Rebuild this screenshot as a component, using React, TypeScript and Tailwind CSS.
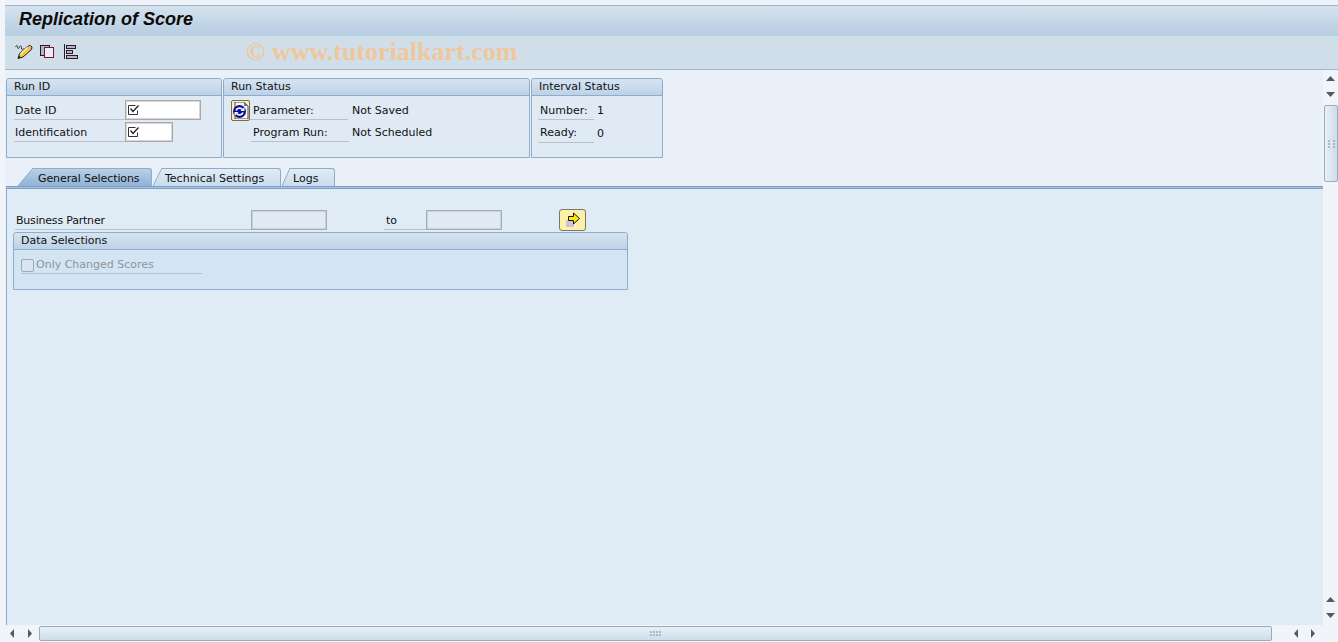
const uiFont = 'font-["DejaVu_Sans","Noto_Sans",sans-serif]';

function EditIcon() {
  return (
    <svg width="18" height="16" viewBox="0 0 18 16">
      <path d="M0.500 3c1-2 2-2 2 0s1 2 2 0 2-1 2 1 1 1.500 2 .5" fill="none" stroke="#333" strokeWidth="1" />
      <path d="M3 14.500l1.500-5 8.500-7.500 2.500-.5 1.500 1.500-.5 2.500-8.500 7.500z" fill="#f5c93e" stroke="#222" strokeWidth="1" />
      <path d="M5.500 10l7.500-7" stroke="#fff4b8" strokeWidth="1.200" />
      <path d="M13 2.500l2.500 2.500" stroke="#e9a6a0" strokeWidth="2" />
      <path d="M3 14.500l1-3 2 2z" fill="#222" />
    </svg>
  );
}

function CopyIcon() {
  return (
    <svg width="14" height="13" viewBox="0 0 14 13">
      <rect x="0.500" y="0.500" width="9" height="10" fill="#b7b3c6" stroke="#1c1c1c" />
      <rect x="4.500" y="2.500" width="9" height="10" fill="#e2eefa" stroke="#8a1020" />
    </svg>
  );
}

function TreeIcon() {
  return (
    <svg width="15" height="15" viewBox="0 0 15 15">
      <path d="M0.500 0v15" stroke="#222" />
      <rect x="2.500" y="1.500" width="9" height="3" fill="#c9a9d6" stroke="#222" />
      <rect x="2.500" y="6.500" width="6" height="3" fill="#c9a9d6" stroke="#222" />
      <rect x="2.500" y="11.500" width="11" height="3" fill="#c9a9d6" stroke="#222" />
    </svg>
  );
}

function CheckMark() {
  return (
    <svg width="12" height="11" viewBox="0 0 12 11">
      <path d="M9.500 5.500v4h-9v-9h7" fill="none" stroke="#333" />
      <path d="M2.500 3.500l2.500 3 5.500-6" fill="none" stroke="#222" strokeWidth="1.300" />
    </svg>
  );
}

function RefreshButton() {
  return (
    <button className="flex h-[21px] w-[19px] items-center justify-center rounded-[2px] border border-[#6f6c58] bg-[#fdedb0]">
      <svg width="16" height="17" viewBox="0 0 16 17">
        <path d="M2 0h9l4 4v13h-13z" fill="#f4f6fa" stroke="#222" strokeWidth="0.800" />
        <path d="M11 0l4 4h-4z" fill="#6f7890" />
        <circle cx="6.500" cy="9.500" r="6.500" fill="#0c0c96" />
        <path d="M3 8.500c1-3 5-3 6.500-1" fill="none" stroke="#f4f6fa" strokeWidth="1.800" />
        <path d="M10 10.500c-1 3-5 3-6.500 1" fill="none" stroke="#f4f6fa" strokeWidth="1.800" />
        <path d="M7.500 9h4v-4zM5.500 10h-4v4z" fill="#f4f6fa" />
      </svg>
    </button>
  );
}

function ArrowButton() {
  return (
    <button className="flex h-[22px] w-[27px] items-center justify-center rounded-[3px] border border-[#77766a] bg-[#fdf0a8]">
      <svg width="16" height="16" viewBox="0 0 16 16">
        <rect x="1" y="8" width="10" height="7" fill="#d3c0dc" />
        <rect x="9" y="11" width="2" height="4" fill="#f4f4f4" />
        <path d="M3.500 4.500h5v-3.500l6 5.500-6 5.500v-3.500h-5z" fill="#ffec00" stroke="#111" strokeWidth="1" />
      </svg>
    </button>
  );
}

function Triangle({ dir }: { dir: 'up' | 'down' | 'left' | 'right' }) {
  const paths = {
    up: 'M0 7L4.500 2L9 7z',
    down: 'M0 2h9L4.500 7z',
    left: 'M6 0v9L2 4.500z',
    right: 'M2 0v9l4-4.500z',
  };
  return (
    <svg width="9" height="9" viewBox="0 0 9 9">
      <path d={paths[dir]} fill="#4c5c6c" />
    </svg>
  );
}

function ScrollButton({ dir, className }: { dir: 'up' | 'down' | 'left' | 'right'; className: string }) {
  return (
    <div className={`flex shrink-0 items-center justify-center bg-[#f1f5fa] ${className}`}>
      <Triangle dir={dir} />
    </div>
  );
}

function Grip({ vertical }: { vertical?: boolean }) {
  return (
    <div className={`grid gap-[1px] ${vertical ? 'grid-cols-2 gap-x-[3px]' : 'grid-cols-4 gap-y-[1px] gap-x-[1px]'}`}>
      {Array.from({ length: vertical ? 6 : 8 }).map((_, i) => (
        <span key={i} className="h-[2px] w-[2px] bg-[#a9bac8]" />
      ))}
    </div>
  );
}

function GroupBox({ title, className, children }: { title: string; className: string; children: React.ReactNode }) {
  return (
    <section className={`rounded-t-[3px] border border-[#8fadcb] ${className}`}>
      <h2 className="h-[17px] rounded-t-[3px] border-b border-[#8fadcb] bg-gradient-to-b from-[#d6e4f1] to-[#bdd2e7] pl-[7px] text-[11px] leading-[16px] font-normal text-[#111]">
        {title}
      </h2>
      {children}
    </section>
  );
}

function Label({ text, className }: { text: string; className: string }) {
  return (
    <div className={`h-[20px] shrink-0 border-b border-[#b6c2cc] text-[11px] leading-[20px] text-[#111] ${className}`}>
      {text}
    </div>
  );
}

function Value({ text, className }: { text: string; className: string }) {
  return <span className={`pt-[1px] text-[11px] leading-[20px] text-[#111] ${className}`}>{text}</span>;
}

function CheckField({ width }: { width: string }) {
  return (
    <div className={`flex h-[20px] items-start border border-[#a8a8a8] bg-white pl-[2px] pt-[4px] shadow-[inset_0_0_0_1px_#d8d8d8] ${width}`}>
      <CheckMark />
    </div>
  );
}

function DisabledField() {
  return <div className="h-[20px] w-[76px] shrink-0 border border-[#a9adb0] bg-[#dfeaf4] shadow-[inset_0_0_0_1px_#c9d0d6]" />;
}

function Tab({
  id,
  label,
  active,
  slant,
  width,
  className,
}: {
  id: string;
  label: string;
  active?: boolean;
  slant: number;
  width: string;
  className: string;
}) {
  return (
    <div className={`flex h-[18px] items-stretch ${className}`}>
      <svg width={slant} height="18" viewBox={`0 0 ${slant} 18`} className="shrink-0">
        <defs>
          <linearGradient id={id} x1="0" y1="0" x2="0" y2="1">
            <stop offset="0" stopColor={active ? '#b9d0e7' : '#e0ebf6'} />
            <stop offset="1" stopColor={active ? '#8fb2d6' : '#c9dcee'} />
          </linearGradient>
        </defs>
        <path d={`M0 18L${slant} 0V18z`} fill={`url(#${id})`} />
        <path d={`M0 18L${slant} 0`} stroke="#8fadcb" fill="none" />
      </svg>
      <div
        className={`rounded-tr-[3px] border-t border-r border-[#8fadcb] text-[11px] leading-[19px] text-[#111] ${width} ${
          active ? 'bg-gradient-to-b from-[#b9d0e7] to-[#8fb2d6]' : 'bg-gradient-to-b from-[#e0ebf6] to-[#c9dcee]'
        }`}
      >
        {label}
      </div>
    </div>
  );
}

export default function App() {
  return (
    <div className={`flex h-[642px] w-[1338px] flex-col overflow-hidden bg-[#f1f5fa] pl-[5px] ${uiFont}`}>
      <div className="h-[5px] shrink-0 bg-[#eef2f8]" />
      <header className="flex h-[31px] shrink-0 items-center border-t border-[#9fb4c8] bg-gradient-to-b from-[#d5e2ee] to-[#b6cde1] pb-[3px] pl-[14px]">
        <h1 className="font-['Liberation_Sans'] text-[18px] font-bold italic text-[#0b0b0b]">Replication of Score</h1>
      </header>
      <div className="flex h-[34px] shrink-0 items-center border-b border-[#9fb4c8] bg-[#d0dee9] pb-[2px] pl-[10px]">
        <EditIcon />
        <span className="ml-[7px] flex"><CopyIcon /></span>
        <span className="ml-[10px] flex"><TreeIcon /></span>
        <span className="ml-[167px] font-['Liberation_Serif'] text-[26px] font-bold text-[#efc79b]">© www.tutorialkart.com</span>
      </div>

      <div className="flex min-h-0 flex-1">
        <div className="flex min-w-0 flex-1 flex-col bg-[#e9f0f8]">
          <div className="flex gap-[1px] pl-[1px] pt-[8px]">
            <GroupBox title="Run ID" className="h-[80px] w-[216px] bg-[#dfeaf4]">
              <div className="flex pl-[7px] pt-[4px]">
                <Label text="Date ID" className="w-[111px] pl-[1px] pt-[1px]" />
                <CheckField width="w-[76px]" />
              </div>
              <div className="flex pl-[7px] pt-[2px]">
                <Label text="Identification" className="w-[111px] pl-[1px] pt-[1px]" />
                <CheckField width="w-[48px]" />
              </div>
            </GroupBox>
            <GroupBox title="Run Status" className="h-[80px] w-[307px] bg-[#dfeaf4]">
              <div className="flex pl-[7px] pt-[4px]">
                <RefreshButton />
                <Label text="Parameter:" className="w-[98px] pl-[3px] pt-[1px]" />
                <Value text="Not Saved" className="pl-[4px]" />
              </div>
              <div className="flex pl-[27px] pt-[1px]">
                <Label text="Program Run:" className="w-[98px] pl-[2px] pt-[1px]" />
                <Value text="Not Scheduled" className="pl-[3px]" />
              </div>
            </GroupBox>
            <GroupBox title="Interval Status" className="h-[80px] w-[132px] bg-[#dfeaf4]">
              <div className="flex pl-[6px] pt-[4px]">
                <Label text="Number:" className="w-[56px] pl-[2px] pt-[1px]" />
                <Value text="1" className="pl-[3px]" />
              </div>
              <div className="flex pl-[6px] pt-[2px]">
                <Label text="Ready:" className="w-[56px] pl-[2px]" />
                <Value text="0" className="pl-[3px]" />
              </div>
            </GroupBox>
          </div>

          <div className="flex pl-[13px] pt-[10px]">
            <Tab id="tab-general" label="General Selections" active slant={15} width="w-[119px] pl-[5px] tracking-[-0.1px]" className="" />
            <Tab id="tab-technical" label="Technical Settings" slant={9} width="w-[119px] pl-[3px]" className="ml-[1px]" />
            <Tab id="tab-logs" label="Logs" slant={8} width="w-[45px] pl-[3px]" className="ml-[1px]" />
          </div>
          <div className="ml-[1px] h-[3px] shrink-0 border-y border-[#7d9fc4] bg-[#a9c3de]" />

          <main className="ml-[1px] flex-1 border-l border-[#8fadcb] bg-[#dfebf5]">
            <div className="flex items-center pl-[8px] pt-[20px]">
              <Label text="Business Partner" className="w-[236px] pl-[1px] pt-[1px] tracking-[-0.2px]" />
              <DisabledField />
              <Label text="to" className="ml-[57px] w-[42px] pl-[2px] pt-[1px]" />
              <DisabledField />
              <span className="ml-[57px] flex"><ArrowButton /></span>
            </div>
            <GroupBox title="Data Selections" className="ml-[6px] mt-[1px] h-[58px] w-[615px] bg-[#d3e4f3]">
              <div className="ml-[7px] mt-[4px] flex h-[20px] w-[181px] items-end border-b border-[#b6c2cc] pb-[1px]">
                <span className="h-[13px] w-[13px] shrink-0 rounded-[2px] border border-[#a3a8ad] bg-[#d9e5f0]" />
                <span className="pl-[2px] text-[11px] leading-[14px] text-[#8d959c]">Only Changed Scores</span>
              </div>
            </GroupBox>
          </main>
        </div>

        <aside className="flex w-[15px] shrink-0 flex-col items-end bg-[#f1f5fa]">
          <ScrollButton dir="up" className="h-[16px] w-[15px]" />
          <ScrollButton dir="down" className="h-[16px] w-[15px]" />
          <div className="mt-[3px] flex h-[77px] w-[14px] items-center justify-center rounded-[2px] border border-[#9babb8] bg-gradient-to-r from-[#e9f0f6] to-[#cddde9]">
            <Grip vertical />
          </div>
          <div className="flex-1" />
          <ScrollButton dir="up" className="h-[16px] w-[15px]" />
          <ScrollButton dir="down" className="mb-[2px] h-[16px] w-[15px]" />
        </aside>
      </div>

      <footer className="flex h-[17px] shrink-0 items-center bg-[#f1f5fa] pr-[17px]">
        <ScrollButton dir="left" className="h-[16px] w-[14px]" />
        <ScrollButton dir="right" className="ml-[3px] h-[16px] w-[16px]" />
        <div className="ml-[1px] flex h-[15px] flex-1 items-center justify-center rounded-[2px] border border-[#9babb8] bg-gradient-to-b from-[#e9f0f6] to-[#cddde9]">
          <Grip />
        </div>
        <div className="w-[16px]" />
        <ScrollButton dir="left" className="h-[16px] w-[16px]" />
        <ScrollButton dir="right" className="ml-[1px] h-[16px] w-[16px]" />
      </footer>
    </div>
  );
}
